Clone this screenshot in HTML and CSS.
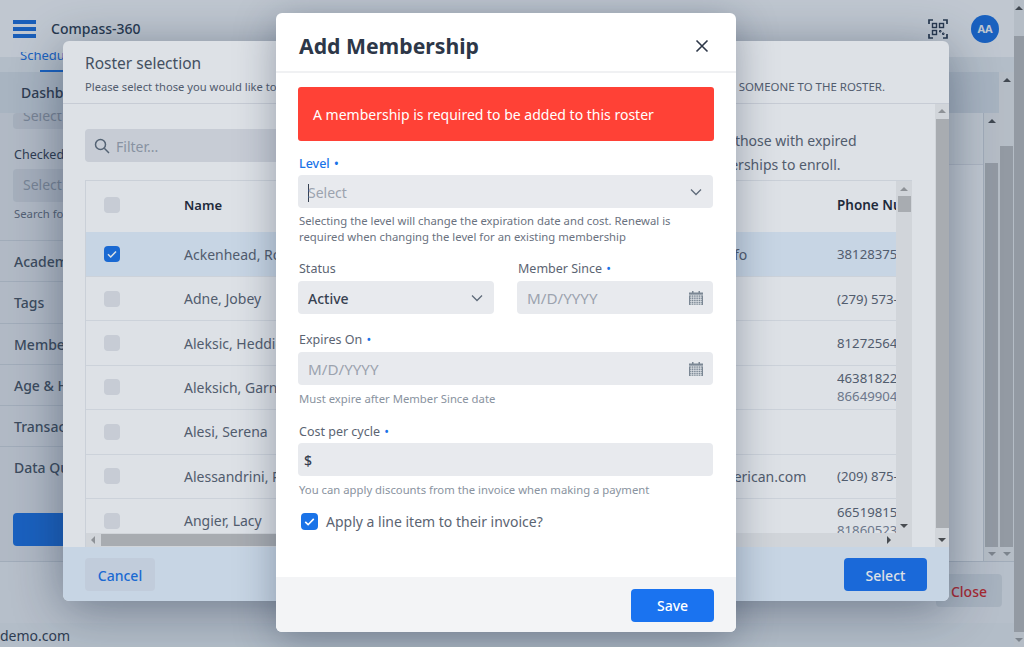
FILE: index.html
```html
<!DOCTYPE html>
<html lang="en">
<head>
  <meta charset="UTF-8">
  <title>Compass-360</title>
  <link rel="stylesheet" href="styles.css">
</head>
<body>
  <div class="app">
    <header class="topbar">
      <div class="burger"><span></span><span></span><span></span></div>
      <div class="brand">Compass-360</div>
      <svg class="qr" viewBox="0 0 20 20" fill="none" stroke="#2d3b4e" stroke-width="1.700">
        <path d="M1 5V1h4M15 1h4v4M1 15v4h4M15 19h4v-4"/>
        <rect x="4.500" y="4.500" width="4" height="4" stroke-width="1.400"/>
        <rect x="11.500" y="4.500" width="4" height="4" stroke-width="1.400"/>
        <rect x="4.500" y="11.500" width="4" height="4" stroke-width="1.400"/>
        <path d="M11.500 11.500h1.500v1.500h-1.500zM14.500 14h1.500v1.500h-1.500z" stroke-width="1"/>
      </svg>
      <div class="avatar">AA</div>
    </header>

    <div class="under">
      <div class="under-top">
        <div class="under-main">
          <div class="tabs"><span class="tab">Schedule</span><span class="tab-line"></span></div>
          <div class="subtabs">Dashboard</div>
          <div class="under-body">
            <aside class="filters">
              <div class="ghost-select clipped">Select</div>
              <div class="filter-label">Checked</div>
              <div class="ghost-select">Select</div>
              <div class="filter-hint">Search for</div>
              <div class="acc">Academic</div>
              <div class="acc">Tags</div>
              <div class="acc">Membership</div>
              <div class="acc">Age &amp; Health</div>
              <div class="acc">Transactions</div>
              <div class="acc acc-last">Data Quality</div>
              <div class="apply"></div>
            </aside>
            <div class="under-content">
              <div class="content-head"></div>
            </div>
            <div class="bar bar-in">
              <i class="arr up"></i><b></b><i class="arr down"></i>
            </div>
          </div>
        </div>
        <div class="bar bar-out">
          <i class="arr up"></i><b></b><i class="arr down"></i>
        </div>
      </div>
      <div class="under-foot"><span class="close-btn">Close</span></div>
    </div>

    <div class="status">demo.com</div>
  </div>

  <div class="page-bar"><i class="arr up"></i><b></b><i class="arr down"></i></div>

  <div class="backdrop"></div>

  <section class="roster">
    <div class="roster-head">
      <h2>Roster selection</h2>
      <p><span>Please select those you would like to add to this roster.</span><span class="caps">SOMEONE TO THE ROSTER.</span></p>
    </div>
    <div class="roster-mid">
      <div class="roster-body">
        <div class="filter-row">
          <div class="filter-box">
            <svg viewBox="0 0 16 16" fill="none" stroke="#5f6b7a" stroke-width="1.500"><circle cx="6.500" cy="6.500" r="5"/><path d="M10.300 10.300L15 15"/></svg>
            <span>Filter...</span>
          </div>
          <div class="filter-note">You can only select those with expired<br>or no active memberships to enroll.</div>
        </div>
        <div class="grid-wrap">
          <div class="grid-view">
            <div class="grid-scroll">
              <div class="row head"><span class="c-check"><i class="box"></i></span><span class="c-name">Name</span><span class="c-mail"></span><span class="c-phone">Phone Number</span></div>
              <div class="row sel"><span class="c-check"><i class="box on"><svg viewBox="0 0 16 16"><path d="M4 8.300l2.700 2.700L12 5.500" fill="none" stroke="#fff" stroke-width="1.500"/></svg></i></span><span class="c-name">Ackenhead, Rosalind</span><span class="c-mail m1">rackenhead@mail.info</span><span class="c-phone">3812837541</span></div>
              <div class="row"><span class="c-check"><i class="box"></i></span><span class="c-name">Adne, Jobey</span><span class="c-mail"></span><span class="c-phone">(279) 573-1182</span></div>
              <div class="row"><span class="c-check"><i class="box"></i></span><span class="c-name">Aleksic, Heddie</span><span class="c-mail"></span><span class="c-phone">8127256421</span></div>
              <div class="row"><span class="c-check"><i class="box"></i></span><span class="c-name">Aleksich, Garner</span><span class="c-mail"></span><span class="c-phone">4638182221<em>8664990481</em></span></div>
              <div class="row"><span class="c-check"><i class="box"></i></span><span class="c-name">Alesi, Serena</span><span class="c-mail"></span><span class="c-phone"></span></div>
              <div class="row"><span class="c-check"><i class="box"></i></span><span class="c-name">Alessandrini, Paola</span><span class="c-mail m2">palessandrini@american.com</span><span class="c-phone">(209) 875-4410</span></div>
              <div class="row"><span class="c-check"><i class="box"></i></span><span class="c-name">Angier, Lacy</span><span class="c-mail"></span><span class="c-phone">6651981517<em>8186052327</em></span></div>
            </div>
            <div class="bar bar-grid"><i class="arr up"></i><b></b><i class="arr down"></i></div>
          </div>
          <div class="hbar"><i class="arr left"></i><b></b><i class="arr right"></i></div>
        </div>
      </div>
      <div class="bar bar-roster"><i class="arr up"></i><b></b><i class="arr down"></i></div>
    </div>
    <div class="roster-foot">
      <span class="btn-soft">Cancel</span>
      <span class="btn-main dim">Select</span>
    </div>
  </section>

  <div class="backdrop"></div>

  <section class="modal">
    <div class="modal-head">
      <h1>Add Membership</h1>
      <svg class="x" viewBox="0 0 14 14" fill="none" stroke="#2d3748" stroke-width="1.600"><path d="M1.500 1.500l11 11M12.500 1.500l-11 11"/></svg>
    </div>
    <div class="modal-body">
      <div class="alert">A membership is required to be added to this roster</div>

      <label class="lbl active">Level <u>•</u></label>
      <div class="field"><span class="ph"><span class="caret"></span>Select</span>
        <svg class="chev" viewBox="0 0 12 8" fill="none" stroke="#5f6b7a" stroke-width="1.300"><path d="M1 1.500l5 5 5-5"/></svg>
      </div>
      <div class="help">Selecting the level will change the expiration date and cost. Renewal is required when changing the level for an existing membership</div>

      <div class="two">
        <div>
          <label class="lbl">Status</label>
          <div class="field"><span class="val">Active</span>
            <svg class="chev" viewBox="0 0 12 8" fill="none" stroke="#5f6b7a" stroke-width="1.300"><path d="M1 1.500l5 5 5-5"/></svg>
          </div>
        </div>
        <div>
          <label class="lbl">Member Since <u>•</u></label>
          <div class="field"><span class="ph date">M/D/YYYY</span>
            <svg class="cal" viewBox="0 0 14 14"><use href="#cal"/></svg>
          </div>
        </div>
      </div>

      <label class="lbl gap-top">Expires On <u>•</u></label>
      <div class="field"><span class="ph date">M/D/YYYY</span>
        <svg class="cal" viewBox="0 0 14 14"><use href="#cal"/></svg>
      </div>
      <div class="help soft">Must expire after Member Since date</div>

      <label class="lbl gap-cost">Cost per cycle <u>•</u></label>
      <div class="field money"><span class="val">$</span></div>
      <div class="help soft">You can apply discounts from the invoice when making a payment</div>

      <div class="check-row">
        <i class="box on big"><svg viewBox="0 0 16 16"><path d="M4 8.300l2.700 2.700L12 5.500" fill="none" stroke="#fff" stroke-width="1.500"/></svg></i>
        <span>Apply a line item to their invoice?</span>
      </div>
    </div>
    <div class="modal-foot"><span class="btn-main">Save</span></div>
  </section>

  <svg class="defs" width="0" height="0">
    <symbol id="cal" viewBox="0 0 14 14">
      <path fill="#7b8794" d="M0 1.500h14V14H0zM3 0h1.500v2H3zM9.500 0H11v2H9.500z"/>
      <path stroke="#e7eaee" stroke-width=".7" fill="none" d="M0 4h14M1 6.200h12M1 8.400h12M1 10.600h12M1 12.800h12M2.300 4v10M4.700 4v10M7 4v10M9.300 4v10M11.700 4v10"/>
    </symbol>
  </svg>
</body>
</html>
```
FILE: styles.css
```css
* {
  margin: 0;
  padding: 0;
  box-sizing: border-box;
}

body {
  width: 1024px;
  height: 647px;
  overflow: hidden;
  position: relative;
  display: flex;
  background: #fff;
  font-family: "Noto Sans", "Open Sans", sans-serif;
  color: #374151;
}

.defs {
  position: absolute;
}

/* page behind the dialogs */
.app {
  width: 1014px;
  height: 647px;
  display: flex;
  flex-direction: column;
  background: #eef1f4;
}

.topbar {
  height: 57px;
  flex: none;
  display: flex;
  align-items: center;
  padding: 0 15px 0 13px;
  background: #fff;
}

.burger {
  width: 23px;
  display: flex;
  flex-direction: column;
  gap: 3px;
}

.burger span {
  height: 4px;
  background: #1a6fe0;
}

.brand {
  margin-left: 15px;
  font-size: 14px;
  font-weight: 500;
  color: #2d3b4e;
}

.qr {
  width: 20px;
  height: 20px;
  margin: 1px 23px 0 auto;
}

.avatar {
  width: 28px;
  height: 28px;
  border-radius: 50%;
  background: #1a73e8;
  color: #fff;
  font-size: 11px;
  font-weight: 700;
  display: flex;
  align-items: center;
  justify-content: center;
}

.under {
  height: 566px;
  flex: none;
  display: flex;
  flex-direction: column;
}

.under-top {
  flex: 1;
  min-height: 0;
  display: flex;
}

.under-main {
  width: 999px;
  display: flex;
  flex-direction: column;
}

.tabs {
  height: 20px;
  margin-top: -5px;
  overflow: hidden;
  padding-left: 20px;
  font-size: 13px;
  line-height: 14px;
  color: #1a73e8;
  display: flex;
  flex-direction: column;
}

.tab {
  display: block;
  margin-top: -4px;
}

.tab-line {
  display: block;
  width: 60px;
  height: 2px;
  margin: auto 0 0 20px;
  background: #1a73e8;
}

.subtabs {
  height: 41px;
  flex: none;
  padding: 11px 0 0 21px;
  font-size: 14px;
  font-weight: 500;
  background: #dfe4ea;
}

.under-body {
  flex: 1;
  display: flex;
  min-height: 0;
}

.filters {
  width: 240px;
  flex: none;
  background: #ebedf0;
  padding: 0 13px;
}

.ghost-select {
  height: 33px;
  border-radius: 4px;
  background: #dcdfe4;
  color: #9ca3af;
  font-size: 14px;
  padding: 6px 10px;
}

.clipped {
  height: 16px;
  padding: 0 10px;
  line-height: 6px;
  overflow: hidden;
}

.filter-label {
  font-size: 12.500px;
  margin: 17px 0 0 1px;
  height: 23px;
}

.filter-hint {
  font-size: 11.300px;
  color: #6b7280;
  margin: 4px 0 0 1px;
  height: 34px;
}

.acc {
  height: 41.300px;
  margin: 0 -13px;
  padding: 11px 13px 0 14px;
  border-top: 1px solid #d5dae0;
  font-size: 14px;
  font-weight: 500;
  color: #4b5563;
}

.acc-last {
  height: 67px;
}

.apply {
  width: 130px;
  height: 33px;
  border-radius: 4px;
  background: #1a73e8;
}

.under-content {
  flex: 1;
  background: #fff;
  border-right: 1px solid #d5dae0;
}

.content-head {
  height: 52px;
  background: #f8f9fa;
  border-bottom: 1px solid #e5e7eb;
}

.under-foot {
  height: 62px;
  flex: none;
  display: flex;
  justify-content: flex-end;
  padding: 12px 12px 0 0;
  background: #f3f4f6;
  border-top: 1px solid #d5dae0;
}

.close-btn {
  width: 66px;
  height: 33px;
  border-radius: 4px;
  background: #dfe3e8;
  color: #dc2626;
  font-size: 14px;
  font-weight: 500;
  display: flex;
  align-items: center;
  justify-content: center;
  padding-top: 2px;
}

.status {
  flex: 1;
  font-size: 14px;
  padding-top: 3px;
  background: #eef1f4;
}

/* scrollbars */
.bar {
  flex: none;
  width: 15px;
  display: flex;
  flex-direction: column;
  align-items: center;
  background: #f1f1f1;
}

.bar b {
  display: block;
  width: 13px;
  flex: 1;
  background: #c1c1c1;
}

.arr {
  display: block;
  flex: none;
  width: 0;
  height: 0;
  border: 4px solid transparent;
}

.arr.up {
  border-top: 0;
  border-bottom: 4px solid #505050;
  margin: 6px 0 7px;
}

.arr.down {
  border-bottom: 0;
  border-top: 4px solid #505050;
  margin: 5px 0 5px;
}

.arr.left {
  border-left: 0;
  border-right: 4px solid #a3a3a3;
  margin: 0 6px 0 5px;
}

.arr.right {
  border-right: 0;
  border-left: 4px solid #505050;
  margin: 0 5px 0 6px;
}

.page-bar {
  width: 10px;
  height: 647px;
  flex: none;
  display: flex;
  flex-direction: column;
  align-items: center;
  background: #f1f1f1;
}

.page-bar b {
  display: block;
  flex: 1;
  width: 10px;
  margin: 19px 0 1px;
  background: #c1c1c1;
}

.page-bar .down {
  border-top-color: #a3a3a3;
}

.bar-out {
  margin-top: 15px;
}

.bar-out b {
  margin-top: 57px;
}

.bar-in b {
  margin-top: 33px;
}

.bar-out .down,
.bar-in .down {
  border-top-color: #a3a3a3;
}

/* overlays */
.backdrop {
  position: absolute;
  inset: 0;
  background: rgba(30, 55, 90, 0.15);
}

.roster {
  position: absolute;
  left: 63px;
  top: 41px;
  width: 886px;
  height: 560px;
  display: flex;
  flex-direction: column;
  background: #fff;
  border-radius: 6px;
  overflow: hidden;
  box-shadow: 0 8px 50px rgba(20, 35, 60, 0.45);
}

.roster-head {
  height: 63px;
  flex: none;
  padding: 11px 22px 0;
  border-bottom: 1px solid #e5e7eb;
  white-space: nowrap;
  overflow: hidden;
}

.roster-head h2 {
  font-size: 15.500px;
  font-weight: 400;
  line-height: 22px;
  color: #4b5563;
}

.roster-head p {
  display: flex;
  justify-content: space-between;
  padding-right: 42px;
  font-size: 11.200px;
  line-height: 15px;
  margin-top: 5px;
  color: #5b6472;
}

.caps {
  font-size: 11.450px;
}

.roster-mid {
  flex: 1;
  min-height: 0;
  display: flex;
}

.roster-body {
  flex: 1;
  min-width: 0;
  padding: 25px 23px 0 22px;
  display: flex;
  flex-direction: column;
}

.filter-row {
  height: 51px;
  flex: none;
  display: flex;
  justify-content: space-between;
}

.filter-box {
  width: 300px;
  height: 33px;
  display: flex;
  align-items: center;
  gap: 6px;
  padding-left: 9px;
  border-radius: 4px;
  background: #e5e7eb;
  color: #9ca3af;
  font-size: 14px;
}

.filter-box svg {
  width: 16px;
  height: 16px;
}

.filter-box span {
  padding-top: 2px;
}

.filter-note {
  font-size: 14px;
  line-height: 24px;
  color: #5b6472;
  width: 290px;
  margin-right: 15px;
}

.grid-wrap {
  flex: 1;
  min-height: 0;
  display: flex;
  flex-direction: column;
  border: 1px solid #e9ebef;
  border-width: 1px 0 0 1px;
}

.grid-view {
  flex: 1;
  min-height: 0;
  display: flex;
}

.grid-scroll {
  flex: 1;
  min-width: 0;
  overflow: hidden;
}

.row {
  display: grid;
  grid-template-columns: 98px 300px 353px 200px;
  align-items: center;
  height: 44.400px;
  border-bottom: 1px solid #eceef1;
  font-size: 14px;
  color: #5b6472;
  white-space: nowrap;
}

.row.head {
  height: 51px;
  padding-bottom: 3px;
  font-weight: 600;
  color: #1f2937;
  font-size: 13px;
  border-bottom: 0;
}

.row.sel {
  background: #e6f1fd;
  height: 45px;
}

.c-check {
  padding-left: 18px;
  display: flex;
}

.m1 {
  padding-left: 116px;
}

.m2 {
  padding-left: 128px;
}

.c-phone {
  font-size: 13.200px;
  line-height: 18px;
  overflow: hidden;
}

.row.head .c-phone {
  font-size: 13.500px;
}

.c-phone em {
  display: block;
  font-style: normal;
  color: #7b8494;
}

.box {
  width: 16px;
  height: 16px;
  display: block;
  border-radius: 4px;
  background: #e5e7eb;
}

.box svg {
  display: block;
  width: 16px;
  height: 16px;
}

.box.on {
  background: #1a73e8;
}

.box.big {
  width: 17px;
  height: 17px;
}

.box.big svg {
  width: 17px;
  height: 17px;
}

.bar-grid {
  width: 16px;
}

.bar-grid .up {
  border-bottom-color: #a3a3a3;
  margin: 6px 0 5px;
}

.bar-grid b {
  flex: none;
  height: 16px;
  margin-bottom: auto;
}

.hbar {
  height: 14px;
  flex: none;
  display: flex;
  align-items: center;
  padding-right: 16px;
  background: #f1f1f1;
}

.hbar b {
  flex: 1;
  height: 12px;
  background: #c1c1c1;
  margin-right: 200px;
}

.bar-roster {
  width: 14px;
}

.bar-roster .up {
  border-bottom-color: #a3a3a3;
  margin: 5px 0 6px;
}

.bar-roster b {
  margin-bottom: 5px;
}

.roster-foot {
  height: 54px;
  flex: none;
  display: flex;
  justify-content: space-between;
  align-items: center;
  padding: 0 22px;
  background: #e6f1fd;
}

.btn-soft {
  width: 70px;
  height: 33px;
  border-radius: 4px;
  background: #dfe7f3;
  color: #1a73e8;
  font-size: 14px;
  font-weight: 500;
  display: flex;
  align-items: center;
  justify-content: center;
  padding-top: 2px;
}

.btn-main {
  width: 83px;
  height: 33px;
  border-radius: 4px;
  background: #1a73f0;
  color: #fff;
  font-size: 14px;
  font-weight: 500;
  display: flex;
  align-items: center;
  justify-content: center;
}

.btn-main.dim {
  padding-top: 2px;
}

/* add membership dialog */
.modal {
  position: absolute;
  left: 276px;
  top: 13px;
  width: 460px;
  height: 619px;
  display: flex;
  flex-direction: column;
  background: #fff;
  border-radius: 6px;
  overflow: hidden;
  box-shadow: 0 8px 40px rgba(20, 35, 60, 0.35);
}

.modal-head {
  height: 60px;
  flex: none;
  display: flex;
  align-items: center;
  justify-content: space-between;
  padding: 7px 27px 0 23px;
  border-bottom: 2px solid #f0f1f3;
}

.modal-head h1 {
  font-size: 21.200px;
  font-weight: 700;
  color: #2d3748;
}

.x {
  width: 14px;
  height: 14px;
}

.modal-body {
  flex: 1;
  padding: 14px 22px 0;
}

.alert {
  height: 54px;
  border-radius: 3px;
  background: #ff4136;
  color: #fff;
  font-size: 14px;
  line-height: 56px;
  padding-left: 15px;
  margin-bottom: 14px;
}

.lbl {
  display: block;
  height: 20px;
  padding: 1px 0 0 1px;
  font-size: 12.500px;
  line-height: 16px;
  color: #5b6472;
}

.lbl u {
  text-decoration: none;
  color: #1a73e8;
  margin-left: 1px;
}

.lbl.active {
  color: #1a73e8;
  font-weight: 500;
}

.two .lbl {
  padding-top: 0;
}

.gap-top {
  margin-top: 18px;
  padding-top: 0;
}

.gap-cost {
  margin-top: 16px;
}

.field {
  height: 33px;
  width: 415px;
  display: flex;
  align-items: center;
  justify-content: space-between;
  padding: 0 10px;
  border-radius: 4px;
  background: #e8eaee;
  font-size: 14px;
}

.ph {
  color: #9ca3af;
  display: flex;
  align-items: center;
  padding-top: 2px;
}

.ph.date {
  font-size: 15.200px;
  padding-top: 0;
}

.caret {
  width: 1px;
  height: 18px;
  background: #374151;
  margin-right: -1px;
}

.val {
  font-weight: 500;
  color: #374151;
  padding-top: 2px;
}

.chev {
  width: 12px;
  height: 8px;
  margin-right: 1px;
}

.cal {
  width: 14px;
  height: 14px;
}

.money {
  padding-left: 6px;
}

.help {
  font-size: 11.300px;
  line-height: 15.500px;
  color: #6b7280;
  margin: 5px 0 0 1px;
}

.help.soft {
  color: #8a93a0;
  margin-top: 6px;
}

.two {
  display: grid;
  grid-template-columns: 196px 196px;
  column-gap: 23px;
  margin-top: 17px;
}

.two .field {
  width: 100%;
}

.check-row {
  display: flex;
  align-items: center;
  gap: 8px;
  margin: 14px 0 0 3px;
  font-size: 14px;
  color: #5b6472;
}

.check-row span {
  padding-top: 1px;
}

.modal-foot {
  height: 55px;
  flex: none;
  display: flex;
  justify-content: flex-end;
  align-items: flex-start;
  padding: 12px 22px 0;
  background: #f3f4f6;
}
```
